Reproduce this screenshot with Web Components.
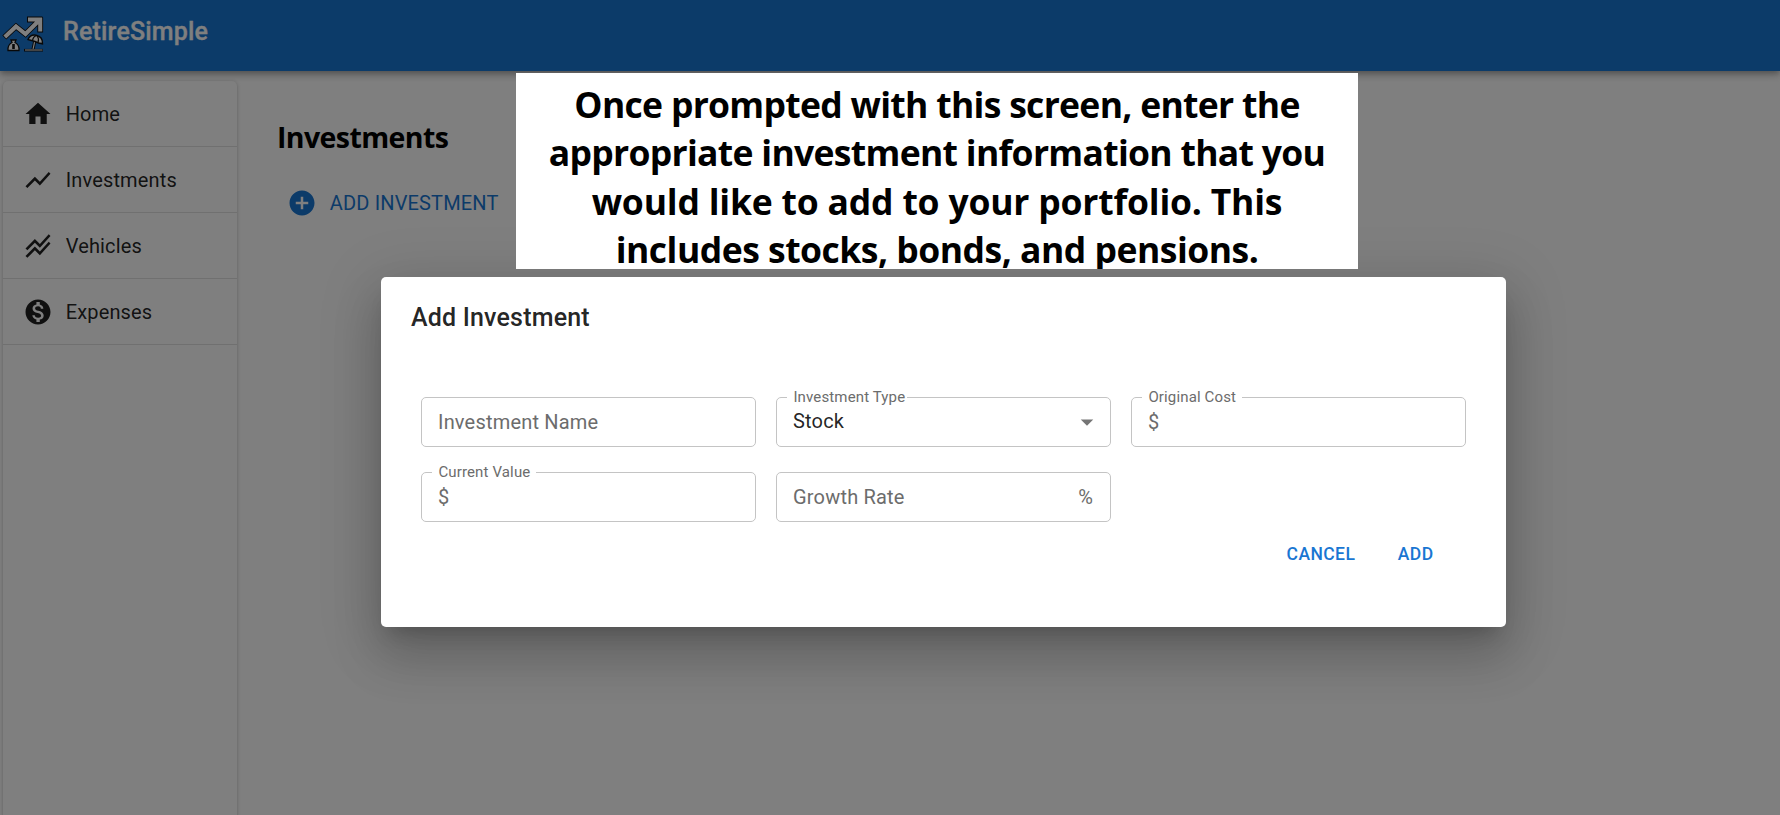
<!DOCTYPE html>
<html lang="en">
<head>
<meta charset="utf-8">
<title>RetireSimple</title>
<style>
html,body{margin:0;height:100%;overflow:hidden;background:#fff}
body{font-family:Roboto,"Liberation Sans",sans-serif;font-size:20px;color:rgba(0,0,0,.87)}
</style>
</head>
<body>
<retire-app></retire-app>
<script>
const define = (name, html, init) => {
  const t = document.createElement('template');
  t.innerHTML = html;
  customElements.define(name, class extends HTMLElement {
    constructor() {
      super();
      this.attachShadow({ mode: 'open' }).append(t.content.cloneNode(true));
    }
    connectedCallback() { if (init) init(this, this.shadowRoot); }
  });
};

const ICONS = {
  home: 'M10 20v-6h4v6h5v-8h3L12 3 2 12h3v8z',
  chart: 'm3.5 18.49 6-6.01 4 4L22 6.92l-1.41-1.41-7.09 7.97-4-4L2 16.99z',
  stacked: 'm2 19.99 7.5-7.51 4 4 7.09-7.97L22 9.92l-8.5 9.56-4-4-6 6.01-1.5-1.5zm1.5-4.5 6-6.01 4 4L22 3.92l-1.41-1.41-7.09 7.97-4-4L2 13.99l1.5 1.5z',
  money: 'M12 2C6.48 2 2 6.48 2 12s4.48 10 10 10 10-4.48 10-10S17.52 2 12 2zm1.41 16.09V20h-2.67v-1.93c-1.71-.36-3.16-1.46-3.27-3.4h1.96c.1 1.05.82 1.87 2.65 1.87 1.96 0 2.4-.98 2.4-1.59 0-.83-.44-1.61-2.67-2.14-2.48-.6-4.18-1.62-4.18-3.67 0-1.72 1.39-2.84 3.11-3.21V4h2.67v1.95c1.86.45 2.79 1.86 2.85 3.39H14.3c-.05-1.11-.64-1.87-2.22-1.87-1.5 0-2.4.68-2.4 1.64 0 .84.65 1.39 2.67 1.91s4.18 1.39 4.18 3.91c-.01 1.83-1.38 2.83-3.12 3.16z',
  add: 'M12 2C6.48 2 2 6.48 2 12s4.48 10 10 10 10-4.48 10-10S17.52 2 12 2zm5 11h-4v4h-2v-4H7v-2h4V7h2v4h4v2z',
  down: 'M7 10l5 5 5-5z'
};

define('ui-icon', `
<style>:host{display:block;flex:none;width:30px;height:30px}svg{display:block;width:100%;height:100%;fill:currentColor}</style>
<svg viewBox="0 0 24 24"><path/></svg>`,
(el, root) => root.querySelector('path').setAttribute('d', ICONS[el.getAttribute('name')]));

define('app-logo', `
<style>:host{display:block;flex:none;width:42px;height:42px}svg{display:block}</style>
<svg width="42" height="42" viewBox="0 0 42 42" fill="none">
  <path d="M2.300 25.500 14 14.500 23.500 22 36.500 9M25 7.500h15.500M38.200 5.500V20.500" stroke="#111" stroke-width="5.800"/>
  <path d="M2.800 25 14 14.500 23.500 22 37 8.500M26 7.500h14M38.200 6V19.500" stroke="#fff" stroke-width="4"/>
  <path d="M9 28h5l-1 2.500c3 1.500 4.300 4.500 4 8H6c-.3-3.500 1-6.500 4-8z" fill="#fff" stroke="#111" stroke-width="1.300"/>
  <path d="M11.500 32v5" stroke="#111" stroke-width="2.600"/>
  <path d="M33 28 31 37.500" stroke="#111" stroke-width="3.200"/>
  <path d="M33 28 31 37.500" stroke="#fff" stroke-width="1.200"/>
  <path d="M26 27.500c1.500-3.500 4.500-5 8-4.300 4 .8 6.800 3.800 6.500 8.600l-4-.8-3.500-1.500-3.500-1z" fill="#fff" stroke="#111" stroke-width="1.400"/>
  <path d="M30.500 28.500c.3-2.200 1.500-4 3.500-5M36 30.500c.8-2.500.5-5-1-7" stroke="#111" stroke-width="1.200"/>
  <path d="M22 38.200h19" stroke="#111" stroke-width="2.600"/><path d="M23 38h17.500" stroke="#fff" stroke-width="1"/>
</svg>`);

define('app-bar', `
<style>:host{display:flex;box-sizing:border-box;height:71px;flex:none;background:#1976d2;color:#fff;padding:12px 0 0 2px;gap:19px;position:relative;z-index:1;
box-shadow:0 2.5px 5px -1px rgba(0,0,0,.2),0 5px 6.25px rgba(0,0,0,.14),0 1.250px 12.5px rgba(0,0,0,.12)}
.t{font-size:25px;font-weight:500;line-height:40px;letter-spacing:.19px;-webkit-text-stroke:.3px}</style>
<app-logo></app-logo><div class="t"><slot></slot></div>`);

define('nav-item', `
<style>:host{display:flex;align-items:center;box-sizing:border-box;height:66px;padding-left:20px;gap:12.700px;border-bottom:1px solid rgba(0,0,0,.12);letter-spacing:.15px}</style>
<ui-icon></ui-icon><slot></slot>`,
(el, root) => { const i = root.querySelector('ui-icon'); i.shadowRoot.querySelector('path').setAttribute('d', ICONS[el.getAttribute('icon')]); i.setAttribute('name', el.getAttribute('icon')); });

define('side-nav', `
<style>:host{display:block;width:234px;flex:none;margin:10px 0 0 3px;background:#fff;border-radius:5px 5px 0 0;
box-shadow:0 2.5px 1.250px -1.250px rgba(0,0,0,.2),0 1.250px 1.250px rgba(0,0,0,.14),0 1.250px 3.750px 1px rgba(0,0,0,.14)}</style><slot></slot>`);

define('page-content', `
<style>:host{display:block;flex:1;padding:45px 0 0 40px}
h2{margin:0;font:700 28.500px/42px "Open Sans","Noto Sans",sans-serif;letter-spacing:-.6px;color:#000}
.add{display:flex;align-items:center;gap:12.800px;margin-top:30px;padding-left:10px;color:#1976d2;letter-spacing:.15px}</style>
<h2>Investments</h2>
<div class="add"><ui-icon name="add"></ui-icon><span>ADD INVESTMENT</span></div>`);

define('info-banner', `
<style>:host{position:absolute;left:516px;top:73px;box-sizing:border-box;width:842px;height:196px;padding-top:7px;overflow:hidden;background:#fff;color:#000;text-align:center;
font:700 35.500px/48.300px "Open Sans","Noto Sans",sans-serif;letter-spacing:-.7px}
div{white-space:nowrap}
.l3{letter-spacing:-.2px}
.l4{margin-top:4.100px;line-height:40px;letter-spacing:-.5px}</style>
<div>Once prompted with this screen, enter the</div><div>appropriate investment information that you</div><div class="l3">would like to add to your portfolio. This</div><div class="l4">includes stocks, bonds, and pensions.</div>`);

define('text-field', `
<style>:host{display:block}
fieldset{display:flex;align-items:center;justify-content:space-between;position:relative;box-sizing:border-box;height:50px;margin:0;padding:0 17px 0 16px;min-width:0;border:1px solid #c4c4c4;border-radius:5px;letter-spacing:.19px;color:#6c6c6c;background:#fff}
.label{position:absolute;left:10.400px;top:-10px;padding:0 6px;background:#fff;font-size:15px;line-height:18px;letter-spacing:.14px;color:#6c6c6c}
.label:empty{display:none}
:host([select]) .main{color:rgba(0,0,0,.87);transform:translateY(-1px)}
:host([select]) .label{padding-right:2px}
ui-icon{margin-right:-9px;color:#757575}</style>
<fieldset><span class="label"></span><span class="main"><slot></slot></span><slot name="end"></slot></fieldset>`,
(el, root) => {
  root.querySelector('.label').textContent = el.getAttribute('label') || '';
  if (el.hasAttribute('select')) {
    const i = document.createElement('ui-icon');
    i.setAttribute('name', 'down');
    root.querySelector('fieldset').append(i);
  }
});

define('investment-dialog', `
<style>:host{display:block;position:absolute;left:381px;top:277px;box-sizing:border-box;width:1125px;height:350px;background:#fff;border-radius:5px;
box-shadow:0 13.750px 18.750px -8.750px rgba(0,0,0,.2),0 30px 47.500px 3.750px rgba(0,0,0,.14),0 11.250px 57.500px 10px rgba(0,0,0,.12)}
h2{margin:0;padding:21px 30px 19px;font-size:25px;font-weight:500;line-height:40px;letter-spacing:.19px}
.grid{display:grid;grid-template-columns:repeat(3,335px);gap:25px 20px;padding:40px 40px 0}
.actions{display:flex;justify-content:flex-end;gap:42.500px;padding:17px 72.500px 0 0;color:#1976d2;font-size:17.500px;font-weight:500;line-height:30px;letter-spacing:.42px}</style>
<h2>Add Investment</h2>
<div class="grid">
<text-field>Investment Name</text-field>
<text-field label="Investment Type" select>Stock</text-field>
<text-field label="Original Cost">$</text-field>
<text-field label="Current Value">$</text-field>
<text-field>Growth Rate<span slot="end">%</span></text-field>
</div>
<div class="actions"><span>CANCEL</span><span>ADD</span></div>`);

define('retire-app', `
<style>:host{display:flex;flex-direction:column;height:100vh;position:relative}
.body{display:flex;flex:1}
.scrim{position:absolute;inset:0;z-index:2;background:rgba(0,0,0,.5)}</style>
<app-bar>RetireSimple</app-bar>
<div class="body">
<side-nav><nav-item icon="home">Home</nav-item><nav-item icon="chart">Investments</nav-item><nav-item icon="stacked">Vehicles</nav-item><nav-item icon="money">Expenses</nav-item></side-nav>
<page-content></page-content>
</div>
<div class="scrim"><investment-dialog></investment-dialog><info-banner></info-banner></div>`);
</script>
</body>
</html>
